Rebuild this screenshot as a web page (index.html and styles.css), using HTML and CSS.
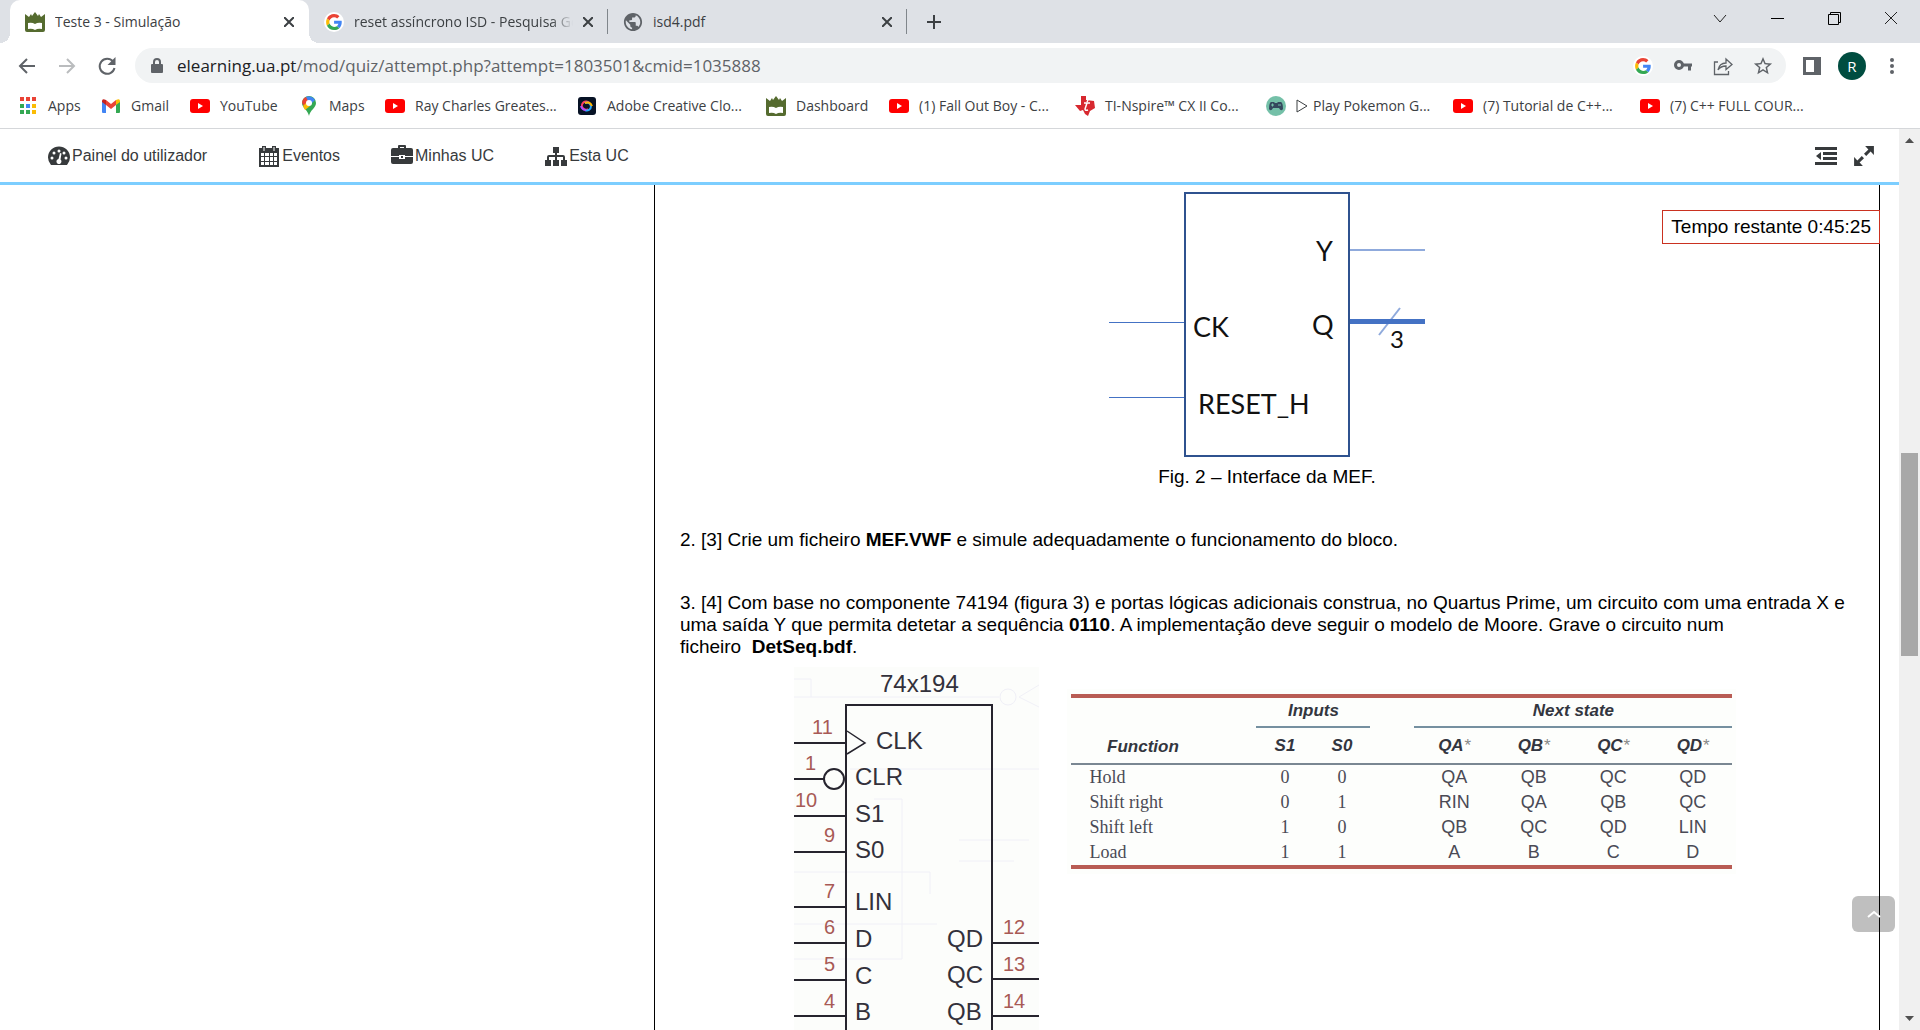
FILE: index.html
```html
<!DOCTYPE html>
<html lang="pt">
<head>
<meta charset="utf-8">
<title>Teste 3 - Simulação</title>
<link rel="stylesheet" href="styles.css">
</head>
<body>
<svg class="defs" aria-hidden="true">
  <symbol id="ua" viewBox="0 0 20 20"><path fill="#556b2f" d="M0 2l4 3 2-3 1 2 3-4 3 4 1-2 2 3 4-3v16q0 2-2 2H2q-2 0-2-2z"/><path fill="#fff" d="M3 11q4-1 7 1 3-2 7-1v6q-4-1-7 1-3-2-7-1z"/></symbol>
  <symbol id="google" viewBox="0 0 48 48"><circle cx="24" cy="24" r="24" fill="#fff"/><g transform="translate(5 5) scale(.8)"><path fill="#EA4335" d="M24 9.5c3.54 0 6.71 1.22 9.21 3.6l6.85-6.85C35.9 2.38 30.47 0 24 0 14.62 0 6.51 5.38 2.56 13.22l7.98 6.19C12.43 13.72 17.74 9.5 24 9.5z"/><path fill="#4285F4" d="M46.98 24.55c0-1.57-.15-3.09-.38-4.55H24v9.02h12.94c-.58 2.96-2.26 5.48-4.78 7.18l7.73 6c4.51-4.18 7.09-10.36 7.09-17.65z"/><path fill="#FBBC05" d="M10.53 28.59c-.48-1.45-.76-2.99-.76-4.59s.27-3.14.76-4.59l-7.98-6.19C.92 16.46 0 20.12 0 24c0 3.88.92 7.54 2.56 10.78l7.97-6.19z"/><path fill="#34A853" d="M24 48c6.48 0 11.93-2.13 15.89-5.81l-7.73-6c-2.15 1.45-4.92 2.3-8.16 2.3-6.26 0-11.57-4.22-13.47-9.91l-7.98 6.19C6.51 42.62 14.62 48 24 48z"/></g></symbol>
  <symbol id="yt" viewBox="0 0 20 14"><rect width="20" height="14" rx="3" fill="#f00"/><path fill="#fff" d="M8 4l5 3-5 3z"/></symbol>
  <symbol id="x" viewBox="0 0 10 10"><path d="M0 0l10 10M10 0L0 10" fill="none" stroke="#3c4043" stroke-width="2"/></symbol>
</svg>

<header class="browser">
  <div class="tabs">
    <div class="tab active"><svg class="fav"><use href="#ua"/></svg><span class="tab-title">Teste 3 - Simulação</span><button class="close" aria-label="Fechar"><svg><use href="#x"/></svg></button></div>
    <div class="tab"><svg class="fav"><use href="#google"/></svg><span class="tab-title fade">reset assíncrono ISD - Pesquisa Google</span><button class="close" aria-label="Fechar"><svg><use href="#x"/></svg></button></div>
    <div class="tab"><svg class="fav" viewBox="1 1 22 22"><path fill="#5f6368" d="M12 2C6.48 2 2 6.48 2 12s4.48 10 10 10 10-4.48 10-10S17.52 2 12 2zm-1 17.93c-3.95-.49-7-3.85-7-7.93 0-.62.08-1.21.21-1.79L9 15v1c0 1.1.9 2 2 2v1.93zm6.9-2.54c-.26-.81-1-1.39-1.9-1.39h-1v-3c0-.55-.45-1-1-1H8v-2h2c.55 0 1-.45 1-1V7h2c1.100 0 2-.9 2-2v-.41c2.930 1.190 5 4.060 5 7.410 0 2.080-.8 3.970-2.100 5.390z"/></svg><span class="tab-title">isd4.pdf</span><button class="close" aria-label="Fechar"><svg><use href="#x"/></svg></button></div>
    <button class="new-tab" aria-label="Novo separador"><svg viewBox="0 0 16 16"><path d="M8 1v14M1 8h14" stroke="#3c4043" stroke-width="2"/></svg></button>
    <div class="window-controls">
      <button aria-label="Pesquisar separadores"><svg viewBox="0 0 16 16"><path d="M2 5l6 7 6-7" fill="none" stroke="#222"/></svg></button>
      <button aria-label="Minimizar"><svg viewBox="0 0 16 16"><path d="M2 8.500h13" stroke="#000"/></svg></button>
      <button aria-label="Restaurar"><svg viewBox="0 0 16 16"><path d="M2.500 4.500h10v10h-10zM4.500 4V2.500h10v10H13" fill="none" stroke="#000"/></svg></button>
      <button aria-label="Fechar janela"><svg viewBox="0 0 16 16"><path d="M2 2l12 12M14 2L2 14" stroke="#222"/></svg></button>
    </div>
  </div>

  <div class="toolbar">
    <button aria-label="Recuar"><svg viewBox="0 0 20 20"><path d="M18 10H3M10 3l-7 7 7 7" fill="none" stroke="#5f6368" stroke-width="2"/></svg></button>
    <button aria-label="Avançar"><svg viewBox="0 0 20 20"><path d="M2 10h15M10 3l7 7-7 7" fill="none" stroke="#babcbe" stroke-width="2"/></svg></button>
    <button aria-label="Recarregar"><svg viewBox="0 0 20 20"><path d="M16 5.500A7.500 7.500 0 1 0 17.500 12" fill="none" stroke="#5f6368" stroke-width="2"/><path d="M18.500 1v8h-8z" fill="#5f6368"/></svg></button>
    <div class="omnibox">
      <svg class="lock" viewBox="0 0 12 16"><path d="M3 7V4a3 3 0 0 1 6 0v3" fill="none" stroke="#5f6368" stroke-width="2"/><rect y="6" width="12" height="9" rx="1" fill="#5f6368"/></svg>
      <a class="url" href="#"><b>elearning.ua.pt</b>/mod/quiz/attempt.php?attempt=1803501&amp;cmid=1035888</a>
      <button aria-label="Google"><svg><use href="#google"/></svg></button>
      <button aria-label="Palavras-passe"><svg viewBox="0 0 20 20"><circle cx="6" cy="9" r="3.500" fill="none" stroke="#5f6368" stroke-width="3"/><path d="M10 7.500h9v3h-1v4h-3v-4h-5z" fill="#5f6368"/></svg></button>
      <button aria-label="Partilhar"><svg viewBox="0 0 20 20"><path d="M5 6H1.500v12.500h14V15" fill="none" stroke="#5f6368" stroke-width="1.300"/><path d="M5 14c1-5 4-7 8-7V3l6 5.500-6 5V10c-4 0-6 1-8 4z" fill="none" stroke="#5f6368" stroke-width="1.300"/></svg></button>
      <button aria-label="Marcador"><svg viewBox="1 1 22 22"><path fill="#5f6368" d="M22 9.240l-7.190-.62L12 2 9.190 8.630 2 9.240l5.460 4.730L5.820 21 12 17.270 18.180 21l-1.630-7.030L22 9.240zM12 15.400l-3.760 2.270 1-4.280-3.320-2.880 4.380-.38L12 6.100l1.710 4.040 4.380.38-3.320 2.880 1 4.280L12 15.400z"/></svg></button>
    </div>
    <div class="profile">
      <button aria-label="Painel lateral"><svg viewBox="0 0 20 20"><path fill="#5f6368" fill-rule="evenodd" d="M1 1h18v18H1zM4 4v12h8V4z"/></svg></button>
      <button class="avatar" aria-label="Perfil">R</button>
      <button aria-label="Menu"><svg viewBox="0 0 20 20"><g fill="#5f6368"><circle cx="10" cy="4" r="2"/><circle cx="10" cy="10" r="2"/><circle cx="10" cy="16" r="2"/></g></svg></button>
    </div>
  </div>

  <nav class="bookmarks">
    <a href="#"><svg viewBox="0 0 20 20"><path fill="#ea4335" d="M2 1h4v4H2zM8 1h4v4H8zM14 1h4v4h-4z"/><path fill="#34a853" d="M2 8h4v4H2zM2 14h4v4H2zM8 14h4v4H8z"/><path fill="#4285f4" d="M8 8h4v4H8z"/><path fill="#fbbc04" d="M14 8h4v4h-4zM14 14h4v4h-4z"/></svg>Apps</a>
    <a href="#"><svg viewBox="0 0 20 20"><path fill="#4285f4" d="M1 5l4 3v9H2q-1 0-1-1z"/><path fill="#34a853" d="M19 5l-4 3v9h3q1 0 1-1z"/><path fill="#ea4335" d="M5 4l5 4 5-4v5l-5 4-5-4z"/><path fill="#c5221f" d="M1 5q0-3 4-1v5L1 6z"/><path fill="#fbbc04" d="M19 5q0-3-4-1v5l4-3z"/></svg>Gmail</a>
    <a href="#"><svg><use href="#yt"/></svg>YouTube</a>
    <a href="#"><svg viewBox="0 0 20 20"><path fill="#34a853" d="M10 20C9 14 3 12 3 7a7 7 0 0 1 14 0c0 5-6 7-7 13z"/><path fill="#4285f4" d="M7 1a7 7 0 0 1 9 3l-5 5-4-4z"/><path fill="#ea4335" d="M3 6q1-4 4-5l2 4-4 5q-2-2-2-4z"/><path fill="#fbbc04" d="M4 10l5-5 2 5-5 4z"/><circle cx="10" cy="7" r="3" fill="#fff"/></svg>Maps</a>
    <a href="#"><svg><use href="#yt"/></svg>Ray Charles Greates...</a>
    <a href="#"><svg viewBox="0 0 20 20"><rect x="1" y="1" width="18" height="18" rx="3" fill="#071225"/><g fill="none" stroke-width="2"><path d="M11 13a4 4 0 1 1 1-6" stroke="#ff3c5f"/><path d="M8 7a4 4 0 1 1 0 7" stroke="#2aa9ff"/><path d="M8 7q5-2 7 3" stroke="#ffb400"/><path d="M4 10q1 4 5 4" stroke="#b04cff"/></g></svg>Adobe Creative Clo...</a>
    <a href="#"><svg><use href="#ua"/></svg>Dashboard</a>
    <a href="#"><svg><use href="#yt"/></svg>(1) Fall Out Boy - C...</a>
    <a href="#"><svg viewBox="0 0 20 20"><path fill="#d7282f" d="M6 0h5v4l8 1 1 7-5 3-2 5-3-2-2-4-3 1-5-6h6z"/><path d="M13 4l-1 2M9 7h6M12 7l-2 6q0 2 3 1" fill="none" stroke="#fff" stroke-width="1.500"/></svg>TI-Nspire™ CX II Co...</a>
    <a href="#"><svg viewBox="0 0 20 20"><circle cx="10" cy="10" r="10" fill="#74c0a8"/><path fill="#35495e" d="M5 6h3l1 1h2l1-1h3q2 1 2 7-2 3-4-1H7q-2 4-4 1 0-6 2-7z"/><path d="M5 9h3M6.500 7.500v3M12 9h3" stroke="#74c0a8"/></svg><span class="play"><svg viewBox="0 0 12 14"><path d="M1 1l10 6-10 6z" fill="none" stroke="#3c4043"/></svg>Play Pokemon G...</span></a>
    <a href="#"><svg><use href="#yt"/></svg>(7) Tutorial de C++...</a>
    <a href="#"><svg><use href="#yt"/></svg>(7) C++ FULL COUR...</a>
  </nav>
</header>

<div class="viewport">
  <div class="page">
    <nav class="site-nav">
      <a href="#"><svg viewBox="0 0 22 20"><path fill="#373a3c" d="M3 19a11 11 0 1 1 16 0z"/><g fill="#fff"><circle cx="4" cy="12" r="1.500"/><circle cx="6" cy="7" r="1.500"/><circle cx="11" cy="5" r="1.500"/><circle cx="18" cy="12" r="1.500"/><circle cx="16" cy="7" r="1.500"/><path d="M12 7l1.500.5-1 6a2.500 2.500 0 1 1-2-.5z"/></g></svg>Painel do utilizador</a>
      <a href="#"><svg viewBox="0 0 22 22"><path fill="#373a3c" fill-rule="evenodd" d="M1 3h3V1h4v2h6V1h4v2h3v19H1zM3 8v3h3V8zm4 0v3h4V8zm5 0v3h3V8zm4 0v3h3V8zM3 12v4h3v-4zm4 0v4h4v-4zm5 0v4h3v-4zm4 0v4h3v-4zM3 17v3h3v-3zm4 0v3h4v-3zm5 0v3h3v-3zm4 0v3h3v-3z"/><path d="M6 2v4M16 2v4" stroke="#fff"/></svg>Eventos</a>
      <a href="#"><svg viewBox="0 0 22 22"><path fill="#373a3c" fill-rule="evenodd" d="M7 3V1q0-1 1-1h6q1 0 1 1v2h5q2 0 2 2v6h-8v-1H8v1H0V5q0-2 2-2zm2 0h4V2H9zM0 12h8v2h6v-2h8v5q0 2-2 2H2q-2 0-2-2z"/><path fill="#373a3c" d="M10 11h2v2h-2z"/></svg>Minhas UC</a>
      <a href="#"><svg viewBox="0 0 22 22"><path fill="#373a3c" d="M8 2h6v6h-2v2h6q2 0 2 2v3h2v6h-6v-6h2v-3h-6v3h2v6H8v-6h2v-3H4v3h2v6H0v-6h2v-3q0-2 2-2h6V8H8z"/></svg>Esta UC</a>
      <div class="site-tools">
        <button aria-label="Ocultar blocos"><svg viewBox="0 0 22 20"><path fill="#373a3c" d="M0 1h22v3H0zM8 6h14v3H8zM8 11h14v3H8zM0 16h22v3H0zM6 6v8l-5-4z"/></svg></button>
        <button aria-label="Ecrã inteiro"><svg viewBox="0 0 20 20"><path fill="#373a3c" d="M11 1h8v8l-3-3-4 4-2-2 4-4zM9 19H1v-8l3 3 4-4 2 2-4 4z"/></svg></button>
      </div>
    </nav>

    <div class="columns">
      <main class="question">
        <figure class="fsm">
          <svg viewBox="0 0 316 281" width="316" height="281" role="img" aria-label="Interface da MEF">
            <rect x="76" y="8" width="164" height="263" fill="#fff" stroke="#2f528f" stroke-width="2"/>
            <path d="M0 137.500h75M0 212.500h75" stroke="#4472c4"/>
            <path d="M241 65h75" stroke-width="2" stroke="#8faadc"/>
            <path d="M270 150l21-27" stroke="#8faadc" stroke-width="2"/>
            <path d="M241 136.500h75" stroke="#4472c4" stroke-width="5"/>
            <g class="fsm-text"><text x="84" y="152">CK</text><text x="89" y="229">RESET_H</text><text x="207" y="76">Y</text><text x="203" y="150">Q</text><text x="281" y="163" class="small">3</text></g>
          </svg>
          <figcaption>Fig. 2 – Interface da MEF.</figcaption>
        </figure>
        <p>2. [3] Crie um ficheiro <b>MEF.VWF</b> e simule adequadamente o funcionamento do bloco.</p>
        <p>3. [4] Com base no componente 74194 (figura 3) e portas lógicas adicionais construa, no Quartus Prime, um circuito com uma entrada X e uma saída Y que permita detetar a sequência <b>0110</b>. A implementação deve seguir o modelo de Moore. Grave o circuito num<br>ficheiro&nbsp; <b>DetSeq.bdf</b>.</p>
        <div class="scans">
          <svg class="chip" viewBox="0 0 245 420" width="245" height="420" role="img" aria-label="74x194">
            <rect width="245" height="420" fill="#fcfdfb"/>
            <g fill="none" stroke="#f0f0f7"><path d="M0 30h205M0 12h17v18M56 102h189M80 132h28v160H0M0 205h136v22M165 194h55M0 257h143M165 173h70"/><circle cx="214" cy="30" r="8"/><path d="M245 18l-20 12 20 10"/></g>
            <g fill="none" stroke="#26242e" stroke-width="2"><path d="M52 420V38h146v382M0 76h52M0 112h30M0 149h52M0 185h52M0 240h52M0 276h52M0 313h52M0 349h52M198 276h47M198 312h47M198 349h47"/><circle cx="40" cy="112" r="10"/><path d="M53 64l18 12-18 11" stroke-width="1.500"/></g>
            <g class="chip-label"><text x="86" y="25">74x194</text><text x="82" y="82">CLK</text><text x="61" y="118">CLR</text><text x="61" y="155">S1</text><text x="61" y="191">S0</text><text x="61" y="243">LIN</text><text x="61" y="280">D</text><text x="61" y="317">C</text><text x="61" y="353">B</text><text x="153" y="280">QD</text><text x="153" y="316">QC</text><text x="153" y="353">QB</text></g>
            <g class="chip-pin"><text x="18" y="67">11</text><text x="11" y="103">1</text><text x="1" y="140">10</text><text x="30" y="175">9</text><text x="30" y="231">7</text><text x="30" y="267">6</text><text x="30" y="304">5</text><text x="30" y="341">4</text><text x="209" y="267">12</text><text x="209" y="304">13</text><text x="209" y="341">14</text></g>
          </svg>
          <div class="truth">
            <table>
              <colgroup><col class="c-fn"><col class="c-in"><col class="c-in"><col class="c-gap"><col class="c-q"><col class="c-q"><col class="c-q"><col class="c-q"></colgroup>
              <thead>
                <tr class="groups"><td></td><th colspan="2" class="ruled">Inputs</th><td></td><th colspan="4" class="ruled">Next state</th></tr>
                <tr class="names"><th class="fn">Function</th><th>S1</th><th>S0</th><td></td><th>QA<i>*</i></th><th>QB<i>*</i></th><th>QC<i>*</i></th><th>QD<i>*</i></th></tr>
              </thead>
              <tbody>
                <tr><th>Hold</th><td class="n">0</td><td class="n">0</td><td></td><td>QA</td><td>QB</td><td>QC</td><td>QD</td></tr>
                <tr><th>Shift right</th><td class="n">0</td><td class="n">1</td><td></td><td>RIN</td><td>QA</td><td>QB</td><td>QC</td></tr>
                <tr><th>Shift left</th><td class="n">1</td><td class="n">0</td><td></td><td>QB</td><td>QC</td><td>QD</td><td>LIN</td></tr>
                <tr><th>Load</th><td class="n">1</td><td class="n">1</td><td></td><td>A</td><td>B</td><td>C</td><td>D</td></tr>
              </tbody>
            </table>
          </div>
        </div>
        <div class="timer">Tempo restante 0:45:25</div>
      </main>
    </div>
    <button class="to-top" aria-label="Voltar ao topo"><svg viewBox="0 0 14 8"><path d="M1 7l6-5 6 5" fill="none" stroke="#fff" stroke-width="2"/></svg></button>
  </div>
  <div class="scrollbar"><svg viewBox="0 0 9 5"><path d="M0 5h9L4.500 0z"/></svg><div class="track"><div class="thumb"></div></div><svg viewBox="0 0 9 5"><path d="M0 0h9L4.500 5z"/></svg></div>
</div>
</body>
</html>
```
FILE: styles.css
```css
* { box-sizing: border-box; }
body {
  margin: 0;
  height: 100vh;
  display: flex;
  flex-direction: column;
  overflow: hidden;
  background: #fff;
  font-family: "Liberation Sans", Arial, sans-serif;
}
button {
  border: 0;
  padding: 0;
  background: none;
  display: flex;
  align-items: center;
  justify-content: center;
}
a { color: inherit; text-decoration: none; }
svg { flex: none; display: block; }
.defs { position: absolute; width: 0; height: 0; }

/* Browser frame */
.browser {
  flex: none;
  font: 14px/20px "Open Sans", "Noto Sans", sans-serif;
  color: #3c4043;
  border-bottom: 1px solid #d5d7da;
}
.tabs {
  display: flex;
  height: 43px;
  padding-left: 10px;
  background: #dee1e6;
}
.tab {
  flex: 0 1 299px;
  min-width: 0;
  display: flex;
  align-items: center;
  padding: 0 15px;
  gap: 10px;
  position: relative;
}
.tab.active { background: #fff; border-radius: 10px 10px 0 0; }
.tab.active::before,
.tab.active::after {
  content: "";
  position: absolute;
  bottom: 0;
  width: 10px;
  height: 10px;
}
.tab.active::before { right: 100%; background: radial-gradient(circle at 0 0, transparent 10px, #fff 10px); }
.tab.active::after { left: 100%; background: radial-gradient(circle at 100% 0, transparent 10px, #fff 10px); }
.tab:not(.active)::after {
  content: "";
  position: absolute;
  right: 0;
  top: 9px;
  width: 1px;
  height: 25px;
  background: #80868b;
}
.fav { width: 20px; height: 20px; }
.tab-title { flex: 1; min-width: 0; overflow: hidden; white-space: nowrap; }
.fade { mask-image: linear-gradient(90deg, #000 90%, transparent); }
.close svg { width: 10px; height: 10px; }
.new-tab { width: 54px; }
.new-tab svg { width: 16px; height: 16px; }
.window-controls { margin: 0 1px 0 auto; display: flex; height: 36px; }
.window-controls button { width: 57px; }
.window-controls svg { width: 16px; height: 16px; }

.toolbar {
  display: flex;
  align-items: center;
  height: 45px;
  padding: 0 18px 0 7px;
}
.toolbar > button { width: 40px; }
.toolbar svg { width: 20px; height: 20px; }
.omnibox {
  flex: 1;
  display: flex;
  align-items: center;
  height: 35px;
  margin: 0 16px 0 8px;
  padding: 0 13px 0 16px;
  gap: 20px;
  border-radius: 18px;
  background: #f1f3f4;
}
.omnibox .lock { width: 12px; height: 16px; margin-right: -6px; }
.url { flex: 1; font-size: 17px; color: #5f6368; }
.url b { font-weight: 400; color: #202124; }
.profile { display: flex; align-items: center; gap: 16px; }
.avatar {
  width: 28px;
  height: 28px;
  border-radius: 50%;
  background: #004d40;
  color: #fff;
  font: 15px/28px "Open Sans", sans-serif;
}

.bookmarks {
  display: grid;
  grid-template-columns: 83px 89px 109px 86px 192px 189px 123px 186px 191px 187px 187px 1fr;
  height: 40px;
  padding-left: 18px;
}
.bookmarks a { display: flex; align-items: center; gap: 10px; height: 36px; white-space: nowrap; }
.bookmarks svg { width: 20px; height: 20px; }
.play { display: flex; align-items: center; gap: 5px; }
.bookmarks .play svg { width: 12px; height: 14px; }

/* Page */
.viewport { flex: 1; min-height: 0; display: flex; }
.page { flex: 1; min-width: 0; display: flex; flex-direction: column; position: relative; overflow: hidden; }
.site-nav {
  flex: none;
  display: flex;
  align-items: center;
  gap: 51px;
  height: 56px;
  padding: 0 24px 0 48px;
  border-bottom: 3px solid #7cceff;
  font-size: 16px;
  color: #373a3c;
}
.site-nav a { display: flex; align-items: center; gap: 2px; }
.site-nav svg { width: 22px; height: 22px; }
.site-tools { margin-left: auto; display: flex; gap: 16px; }
.columns {
  flex: 1;
  min-height: 0;
  display: grid;
  grid-template-columns: 8fr 15fr;
  padding-right: 19px;
}
.question {
  grid-column: 2;
  position: relative;
  padding: 0 25px;
  border: solid #000;
  border-width: 0 1px;
  font-size: 19px;
  line-height: 22px;
  color: #000;
}
.question p { margin: 41px 0 0; }
.fsm { margin: 0; display: flex; flex-direction: column; align-items: center; }
.fsm-text { font: 27px Lato, sans-serif; fill: #111; }
.fsm-text .small { font-size: 24px; }
.timer {
  position: absolute;
  top: 25px;
  right: -1px;
  padding: 5px 8px;
  border: 1px solid #ca3120;
  background: #fff;
}

.scans { display: flex; justify-content: center; align-items: flex-start; gap: 28px; margin-top: 9px; padding-right: 3px; }
.chip-label { font: 24px "Liberation Sans", Arial, sans-serif; fill: #33313b; }
.chip-pin { font: 20px "Liberation Sans", Arial, sans-serif; fill: #a85a55; }
.truth { margin-top: 22px; padding: 5px 4px; background: #fdfefc; }
.truth table {
  table-layout: fixed;
  width: 661px;
  border-spacing: 0;
  border-top: 4px solid #b95c54;
  border-bottom: 4px solid #b95c54;
  font-size: 18px;
  line-height: 25px;
  color: #4a4a55;
  text-align: center;
}
.truth th, .truth td { padding: 0; }
.c-fn { width: 185px; }
.c-in { width: 57px; }
.c-gap { width: 44px; }
.groups th, .names th { font-size: 17px; font-style: italic; color: #33363f; }
.groups > * { height: 30px; }
.truth .ruled { padding-bottom: 3px; border-bottom: 2px solid #7590a0; }
.names > * { height: 37px; border-bottom: 2px solid #7a8792; }
.truth .fn { padding: 2px 72px 0 30px; }
.names i { font-weight: 400; color: #888; }
.truth tbody th { padding-left: 18px; text-align: left; font-weight: 400; }
.truth tbody th, .truth .n { font-family: "Liberation Serif", "Times New Roman", serif; font-size: 18px; }

.to-top {
  position: absolute;
  right: 4px;
  bottom: 98px;
  width: 43px;
  height: 36px;
  border-radius: 6px;
  background: rgba(0, 0, 0, .25);
}
.to-top svg { width: 14px; height: 8px; }
.scrollbar {
  flex: none;
  display: flex;
  flex-direction: column;
  align-items: center;
  width: 21px;
  padding: 9px 0;
  background: #f0f0f0;
}
.scrollbar svg { width: 9px; height: 5px; fill: #505050; }
.track { flex: 1; width: 17px; padding-top: 310px; }
.thumb { height: 203px; background: #a8a8a8; }
```
